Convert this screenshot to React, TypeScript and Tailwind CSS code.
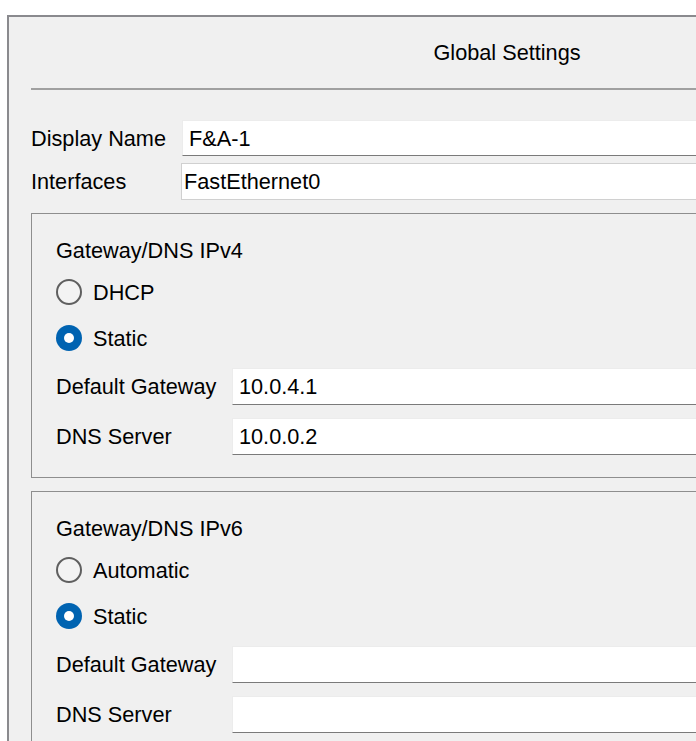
const font = { fontFamily: '"Liberation Sans", Arial, sans-serif' };

function Radio({ checked, label }: { checked?: boolean; label: string }) {
  return (
    <div className="flex items-center h-[36px]">
      {checked ? (
        <span className="w-[26px] h-[26px] rounded-full bg-[#0063b1] flex items-center justify-center">
          <span className="w-[10px] h-[10px] rounded-full bg-white" />
        </span>
      ) : (
        <span className="w-[26px] h-[26px] rounded-full border-2 border-[#5f5f5f] bg-[#f3f3f3]" />
      )}
      <span className="ml-[11px]">{label}</span>
    </div>
  );
}

function Field({ label, value }: { label: string; value?: string }) {
  return (
    <div className="flex items-center h-[37px]">
      <span className="w-[176px] shrink-0">{label}</span>
      <div className="flex-1 h-full bg-white border border-[#ececec] border-b-[#7a7a7a] flex items-center pl-[6px]">
        {value}
      </div>
    </div>
  );
}

function Group({ title, first, gw, dns }: { title: string; first: string; gw: string; dns: string }) {
  return (
    <div className="border border-[#8e8e8e] ml-[22px] pl-[24px] pt-[18px] pb-[22px]">
      <div className="h-[36px] flex items-center">{title}</div>
      <div className="mt-[6px]">
        <Radio label={first} />
      </div>
      <div className="mt-[10px]">
        <Radio checked label="Static" />
      </div>
      <div className="mt-[12px]">
        <Field label="Default Gateway" value={gw} />
      </div>
      <div className="mt-[13px]">
        <Field label="DNS Server" value={dns} />
      </div>
    </div>
  );
}

export default function App() {
  return (
    <div className="w-[696px] h-[741px] overflow-hidden bg-white pt-[15px] pl-[7px]" style={font}>
      <div className="w-[1000px] h-[800px] border-2 border-[#8a8a8e] bg-[#f0f0f0] text-[21.7px] text-black leading-[25px]">
        <div className="h-[71px] flex items-center justify-center">Global Settings</div>
        <div className="ml-[22px] h-[2px] bg-[#a0a0a0]" />

        <div className="mt-[30px] ml-[22px] flex items-center h-[36px]">
          <span className="w-[151px] shrink-0">Display Name</span>
          <div className="flex-1 h-full bg-white border border-[#ececec] border-b-[#7a7a7a] flex items-center pl-[6px]">
            F&amp;A-1
          </div>
        </div>
        <div className="mt-[7px] ml-[22px] flex items-center h-[37px]">
          <span className="w-[150px] shrink-0">Interfaces</span>
          <div className="flex-1 h-full bg-white border border-[#d0d0d0] flex items-center pl-[2px]">
            FastEthernet0
          </div>
        </div>

        <div className="mt-[13px]">
          <Group title="Gateway/DNS IPv4" first="DHCP" gw="10.0.4.1" dns="10.0.0.2" />
        </div>
        <div className="mt-[13px]">
          <Group title="Gateway/DNS IPv6" first="Automatic" gw="" dns="" />
        </div>
      </div>
    </div>
  );
}
